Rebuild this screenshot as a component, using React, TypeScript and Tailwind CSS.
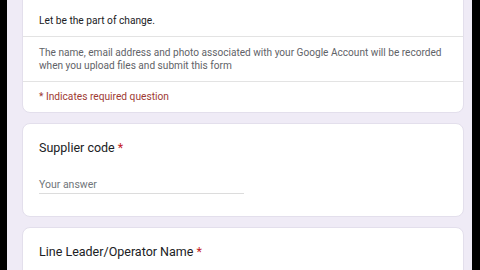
import React from 'react';

const font = { fontFamily: 'Roboto, "Noto Sans", sans-serif' };

const Card: React.FC<{ className?: string; children: React.ReactNode }> = ({ className = '', children }) => (
  <div className={`bg-white rounded-[8px] border border-[#e3dfec] ${className}`}>{children}</div>
);

const Question: React.FC<{ label: string }> = ({ label }) => (
  <div className="text-[12.5px] leading-[16px] text-[#202124]">
    {label} <span className="text-[#c5221f]">*</span>
  </div>
);

export default function App() {
  return (
    <div className="w-[480px] h-[270px] overflow-hidden flex bg-black" style={font}>
      <div className="w-[7px] shrink-0 bg-black" />
      <div className="flex-1 bg-[#efebf6] pl-[15px] pr-[8px] overflow-hidden">
        <div className="flex flex-col gap-[10px] -mt-[41px]">
          {/* header card, scrolled partly out of view */}
          <Card>
            <div className="px-4 pt-[10px] pb-[8px]">
              <div className="text-[25px] leading-[30px] text-[#202124] whitespace-nowrap">
                QC Supplier Setup, Daily Training Log
              </div>
              <div className="mt-[14px] text-[10.2px] leading-[14px] text-[#202124]">Let be the part of change.</div>
            </div>
            <div className="border-t border-[#e3e3e3] px-4 pt-[9px] pb-[9px] text-[10.1px] leading-[13px] text-[#5f6368]">
              The name, email address and photo associated with your Google Account will be recorded
              <br />
              when you upload files and submit this form
            </div>
            <div className="border-t border-[#e3e3e3] px-4 pt-[8px] pb-[8px] text-[10.2px] leading-[14px] text-[#9e3a33]">
              * Indicates required question
            </div>
          </Card>

          <Card className="px-4 pt-[16px] pb-[22px]">
            <Question label="Supplier code" />
            <div className="mt-[22px] w-[205px] border-b border-[#dcdcdc] pb-[1px] text-[10.5px] leading-[14px] text-[#70757a]">
              Your answer
            </div>
          </Card>

          <Card className="px-4 pt-[16px] h-[80px]">
            <Question label="Line Leader/Operator Name" />
          </Card>
        </div>
      </div>
      <div className="w-[8px] shrink-0 bg-black" />
    </div>
  );
}
